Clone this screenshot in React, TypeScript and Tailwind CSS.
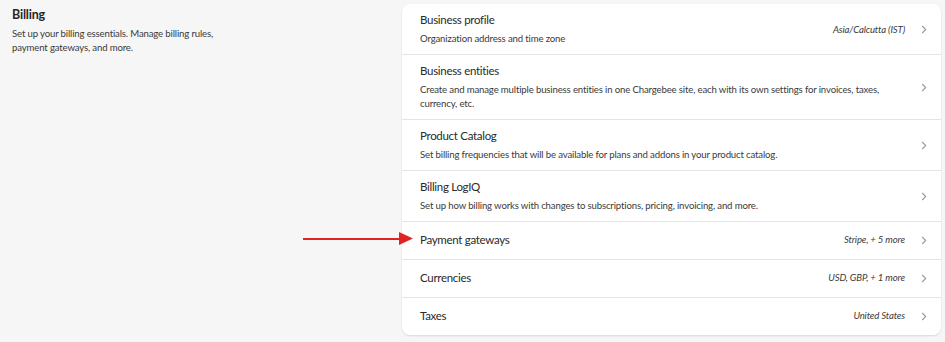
import React from "react";

interface SettingRow {
  title: string;
  desc?: string;
  value?: string;
}

const rows: SettingRow[] = [
  {
    title: "Business profile",
    desc: "Organization address and time zone",
    value: "Asia/Calcutta (IST)",
  },
  {
    title: "Business entities",
    desc: "Create and manage multiple business entities in one Chargebee site, each with its own settings for invoices, taxes, currency, etc.",
  },
  {
    title: "Product Catalog",
    desc: "Set billing frequencies that will be available for plans and addons in your product catalog.",
  },
  {
    title: "Billing LogIQ",
    desc: "Set up how billing works with changes to subscriptions, pricing, invoicing, and more.",
  },
  { title: "Payment gateways", value: "Stripe, + 5 more" },
  { title: "Currencies", value: "USD, GBP, + 1 more" },
  { title: "Taxes", value: "United States" },
];

const Chevron: React.FC = () => (
  <svg width="6" height="9" viewBox="0 0 6 9" fill="none" className="shrink-0">
    <path d="M1.2 1l3.5 3.5L1.2 8" stroke="#9a9a9a" strokeWidth="1.1" />
  </svg>
);

const App: React.FC = () => {
  return (
    <div
      className="min-h-[342px] w-full bg-[#f6f6f6] text-[#2d2d2d]"
      style={{ fontFamily: "Lato, 'Liberation Sans', sans-serif" }}
    >
      <div className="flex pt-1 pr-1">
        {/* Section intro */}
        <div className="w-[402px] shrink-0 pl-3 pt-[2px]">
          <h2 className="text-[12.5px] font-bold leading-[18px] tracking-[-0.2px] text-[#262626]">
            Billing
          </h2>
          <p className="mt-[3px] w-[230px] text-[9.6px] leading-[13.5px] tracking-[-0.15px] text-[#3a3a3a]">
            Set up your billing essentials. Manage billing rules, payment
            gateways, and more.
          </p>
        </div>

        {/* Settings card */}
        <div className="relative flex-1 rounded-lg bg-white shadow-[0_1px_2px_rgba(0,0,0,0.12)]">
          <div className="divide-y divide-[#e4e4e4]">
            {rows.map((row) => (
              <div
                key={row.title}
                className={`flex items-center gap-4 pl-[18px] pr-[14px] ${
                  row.desc ? "pt-[9px] pb-[8px]" : "pt-[11px] pb-[12px]"
                }`}
              >
                <div className="min-w-0 flex-1">
                  <div className="text-[11.5px] leading-[14px] tracking-[-0.3px] text-[#2a2a2a]">
                    {row.title}
                  </div>
                  {row.desc && (
                    <p className="mt-[5px] max-w-[475px] text-[9.6px] leading-[14px] tracking-[-0.15px] text-[#3a3a3a]">
                      {row.desc}
                    </p>
                  )}
                </div>
                {row.value && (
                  <span className="text-[9.6px] leading-[14px] italic tracking-[-0.15px] text-[#3a3a3a]">
                    {row.value}
                  </span>
                )}
                <Chevron />
              </div>
            ))}
          </div>

          {/* annotation arrow pointing at Payment gateways */}
          <div className="pointer-events-none absolute left-[-99px] top-[228px] flex items-center">
            <div className="h-[2px] w-[98px] bg-[#e02424]" />
            <svg width="14" height="13" viewBox="0 0 14 13" className="-ml-[2px]">
              <path d="M0 0L14 6.5L0 13Z" fill="#e02424" />
            </svg>
          </div>
        </div>
      </div>
    </div>
  );
};

export default App;
